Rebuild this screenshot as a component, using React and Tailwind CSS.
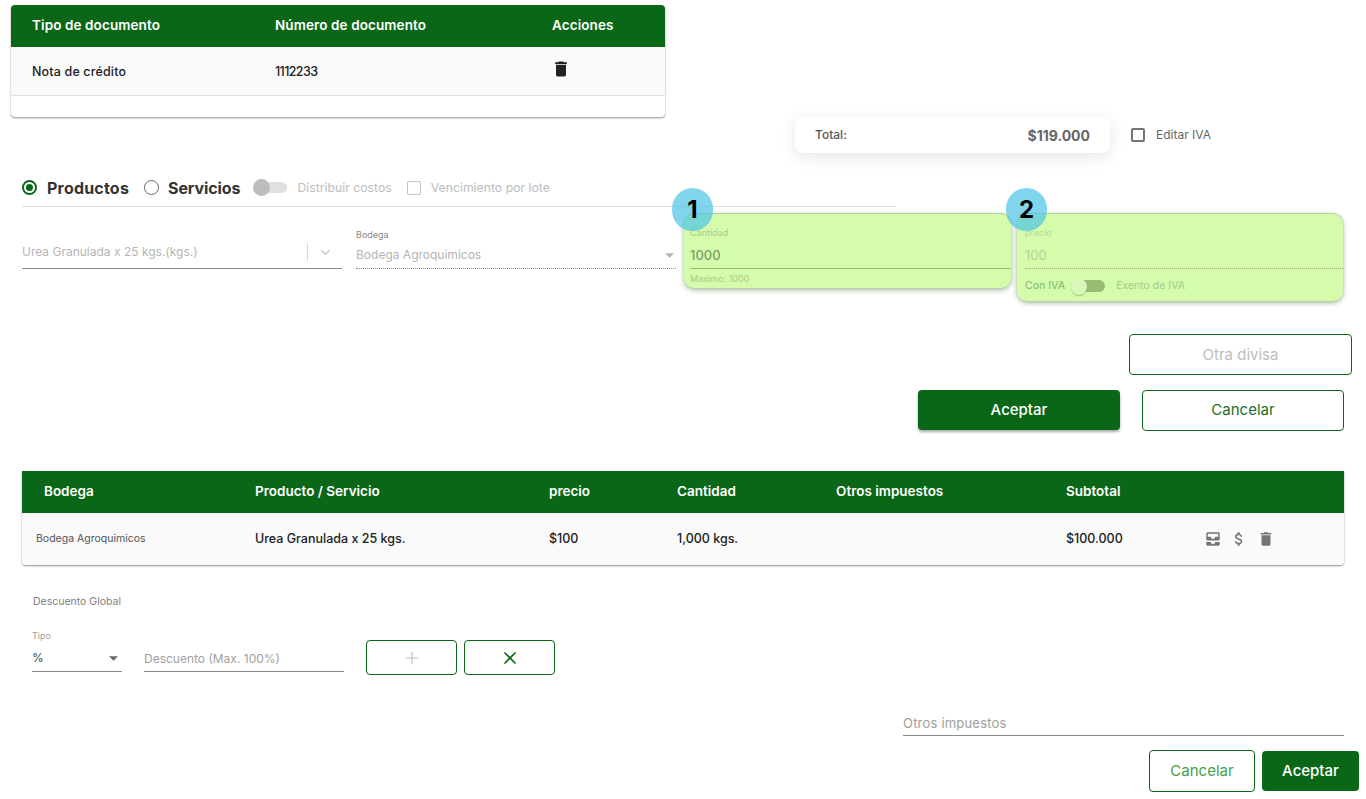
import { ChevronDown, Plus, X } from 'lucide-react'

function Trash({ className }) {
  return (
    <svg viewBox="0 0 24 24" className={className} fill="currentColor">
      <path d="M6 19c0 1.1.9 2 2 2h8c1.1 0 2-.9 2-2V7H6v12zM19 4h-3.5l-1-1h-5l-1 1H5v2h14V4z" />
    </svg>
  )
}

function AllInbox({ className }) {
  return (
    <svg viewBox="0 0 24 24" className={className} fill="currentColor">
      <path d="M19 3H5c-1.1 0-2 .9-2 2v7c0 1.1.9 2 2 2h14c1.1 0 2-.9 2-2V5c0-1.1-.9-2-2-2zm0 6h-4c0 1.62-1.38 3-3 3s-3-1.38-3-3H5V5h14v4zm-4 7h6v3c0 1.1-.9 2-2 2H5c-1.1 0-2-.9-2-2v-3h6c0 1.66 1.34 3 3 3s3-1.34 3-3z" />
    </svg>
  )
}

function Dollar({ className }) {
  return (
    <svg viewBox="0 0 24 24" className={className} fill="currentColor">
      <path d="M11.8 10.9c-2.27-.59-3-1.2-3-2.15 0-1.09 1.01-1.85 2.7-1.85 1.78 0 2.44.85 2.5 2.1h2.21c-.07-1.72-1.12-3.3-3.21-3.81V3h-3v2.16c-1.94.42-3.5 1.68-3.5 3.61 0 2.31 1.91 3.46 4.7 4.13 2.5.6 3 1.48 3 2.41 0 .69-.49 1.79-2.7 1.79-2.06 0-2.87-.92-2.98-2.1h-2.2c.12 2.19 1.76 3.42 3.68 3.83V21h3v-2.15c1.95-.37 3.5-1.5 3.5-3.55 0-2.84-2.43-3.81-4.7-4.4z" />
    </svg>
  )
}

function Caret({ className }) {
  return (
    <svg viewBox="0 0 10 5" className={className} fill="currentColor">
      <path d="M0 0h10L5 5z" />
    </svg>
  )
}

function Badge({ n, className }) {
  return (
    <div className={`absolute top-[188px] w-[41px] h-[43px] rounded-full bg-[#4cc4e6]/70 flex items-center justify-center text-[24px] font-bold text-black ${className}`}>
      {n}
    </div>
  )
}

export default function App() {
  return (
    <div className="relative w-[1366px] h-[799px] overflow-hidden bg-white font-['Inter',sans-serif] text-[#212121]">
      {/* tabla documentos */}
      <div className="ml-[11px] pt-[5px] w-[654px]">
        <div className="h-[112px] rounded-[4px] overflow-hidden bg-white shadow-[0_1px_2px_rgba(0,0,0,0.45)]">
          <div className="h-[42px] pb-[2px] bg-[#0b6718] flex items-center text-white text-[13.5px] font-semibold tracking-[0.1px]">
            <div className="w-[264px] pl-[21px]">Tipo de documento</div>
            <div className="w-[277px]">Número de documento</div>
            <div>Acciones</div>
          </div>
          <div className="h-[49px] pt-[2px] bg-[#fafafa] border-b border-[#e0e0e0] flex items-center text-[12.5px] font-medium">
            <div className="w-[264px] pl-[21px] tracking-[0.15px]">Nota de crédito</div>
            <div className="w-[277px] tracking-[-0.6px]">1112233</div>
            <Trash className="w-[20px] h-[20px] -ml-[1px] -mt-[7px] text-[#212121]" />
          </div>
        </div>
      </div>

      {/* total */}
      <div className="flex items-center pl-[795px] h-[36px]">
        <div className="w-[315px] h-[36px] rounded-[8px] bg-white shadow-[0_4px_16px_rgba(0,0,0,0.1)] flex items-center justify-between pl-[20px] pr-[20px]">
          <span className="text-[12px] font-medium text-[#555]">Total:</span>
          <span className="text-[14px] font-bold text-[#666]">$119.000</span>
        </div>
        <div className="ml-[21px] w-[14px] h-[14px] rounded-[2px] border-2 border-[#757575]" />
        <span className="ml-[11px] text-[12px] text-[#666]">Editar IVA</span>
      </div>

      {/* productos / servicios */}
      <div className="ml-[22px] mt-[23px] w-[874px] h-[31px] border-b border-[#e0e0e0] flex items-start">
        <div className="mt-[4px] w-[15px] h-[15px] rounded-full border-2 border-[#0b6718] flex items-center justify-center">
          <div className="w-[7px] h-[7px] rounded-full bg-[#0b6718]" />
        </div>
        <span className="ml-[10px] text-[16px] font-bold tracking-[0.2px] text-[#333]">Productos</span>
        <div className="ml-[15px] mt-[4px] w-[15px] h-[15px] rounded-full border-[1.5px] border-[#666]" />
        <span className="ml-[9px] text-[16px] font-bold tracking-[-0.1px] text-[#333]">Servicios</span>
        <div className="relative ml-[13px] mt-[4px] w-[34px] h-[14px]">
          <div className="absolute left-[2px] right-0 top-[2px] h-[11px] rounded-full bg-[#e0e0e0]" />
          <div className="absolute left-0 -top-[1px] w-[17px] h-[17px] rounded-full bg-[#bdbdbd]" />
        </div>
        <span className="ml-[10px] mt-[3px] text-[12.25px] text-[#bdbdbd]">Distribuir costos</span>
        <div className="ml-[15px] mt-[5px] w-[14px] h-[14px] border-[1.5px] border-[#c4c4c4] rounded-[2px]" />
        <span className="ml-[10px] mt-[3px] text-[12.25px] text-[#bdbdbd]">Vencimiento por lote</span>
      </div>

      {/* formulario */}
      <div className="flex items-start ml-[22px] mt-[7px]">
        <div className="w-[320px] h-[55px] border-b border-[#8a8a8a] flex items-end pb-[7px]">
          <span className="flex-1 text-[12px] text-[#b5b5b5]">Urea Granulada x 25 kgs.(kgs.)</span>
          <div className="w-px h-[18px] bg-[#d8d8d8] mr-[10px]" />
          <ChevronDown className="w-[15px] h-[15px] mr-[9px] mb-[1px] text-[#bdbdbd]" />
        </div>
        <div className="ml-[14px] w-[320px] h-[55px] border-b border-dotted border-[#8a8a8a] flex flex-col justify-end pb-[4px]">
          <span className="text-[9px] text-[#888] mb-[5px]">Bodega</span>
          <div className="flex items-center justify-between pr-[2px]">
            <span className="text-[12px] text-[#b5b5b5]">Bodega Agroquimicos</span>
            <Caret className="w-[9px] h-[5px] text-[#b5b5b5]" />
          </div>
        </div>

        <div className="ml-[8px] w-[327px] h-[74px] rounded-[10px] bg-[#d5fcab] shadow-[0_-1px_1px_rgba(100,170,60,0.5),0_2px_5px_rgba(70,120,50,0.5)] pl-[6px] pt-[12px] flex flex-col">
          <span className="text-[9px] text-[#a9c98f]">Cantidad</span>
          <span className="mt-[6px] text-[13px] font-medium text-[#7f9c6a]">1000</span>
          <div className="mt-[3px] h-px shrink-0 bg-[#97bc79]" />
          <span className="mt-[3px] text-[9px] text-[#a9c98f]">Maximo: 1000</span>
        </div>

        <div className="ml-[6px] w-[326px] h-[87px] rounded-[10px] bg-[#d5fcab] shadow-[0_-1px_1px_rgba(100,170,60,0.5),0_2px_5px_rgba(70,120,50,0.5)] pl-[8px] pt-[12px] flex flex-col">
          <span className="text-[9px] text-[#b9d99f]">precio</span>
          <span className="mt-[6px] text-[13px] text-[#b3d598]">100</span>
          <div className="mt-[3px] shrink-0 border-b border-dotted border-[#97bc79]" />
          <div className="mt-[9px] flex items-center">
            <span className="text-[10.5px] font-medium text-[#8fc078]">Con IVA</span>
            <div className="relative ml-[6px] w-[34px] h-[14px]">
              <div className="absolute left-[8px] right-0 top-[1px] h-[12px] rounded-full bg-[#97bd73]" />
              <div className="absolute left-0 top-0 w-[16px] h-[16px] rounded-full bg-[#d9f7ba] shadow-[0_1px_1px_rgba(70,120,50,0.4)]" />
            </div>
            <span className="ml-[11px] text-[10.5px] text-[#a3c98c]">Exento de IVA</span>
          </div>
        </div>
      </div>

      <Badge n="1" className="left-[672px]" />
      <Badge n="2" className="left-[1006px]" />

      {/* botones formulario */}
      <div className="mt-[33px] flex justify-end pr-[14px]">
        <div className="w-[223px] h-[41px] pt-[1px] rounded-[4px] border border-[#0b6718] flex items-center justify-center text-[15px] text-[#bdbdbd]">
          Otra divisa
        </div>
      </div>
      <div className="mt-[15px] ml-[918px] flex items-start">
        <div className="w-[202px] h-[40px] rounded-[4px] bg-[#0b6718] shadow-[0_2px_3px_rgba(0,0,0,0.35)] flex items-center justify-center text-[15px] font-medium text-white">
          Aceptar
        </div>
        <div className="ml-[22px] w-[202px] h-[41px] rounded-[4px] border border-[#0b6718] flex items-center justify-center text-[15px] text-[#1b6e2a]">
          Cancelar
        </div>
      </div>

      {/* tabla productos */}
      <div className="ml-[22px] mt-[40px] w-[1322px] h-[94px] rounded-b-[4px] overflow-hidden shadow-[0_1px_2px_rgba(0,0,0,0.45)]">
        <div className="h-[42px] pb-[2px] bg-[#0b6718] flex items-center text-white text-[13.5px] font-semibold">
          <div className="w-[233px] pl-[22px]">Bodega</div>
          <div className="w-[294px]">Producto / Servicio</div>
          <div className="w-[128px]">precio</div>
          <div className="w-[159px]">Cantidad</div>
          <div className="w-[230px]">Otros impuestos</div>
          <div>Subtotal</div>
        </div>
        <div className="h-[52px] bg-[#fafafa] flex items-center text-[12.5px] font-medium">
          <div className="w-[233px] pl-[14px] text-[10.5px] font-normal text-[#555]">Bodega Agroquimicos</div>
          <div className="w-[294px]">Urea Granulada x 25 kgs.</div>
          <div className="w-[128px]">$100</div>
          <div className="w-[159px]">1,000 kgs.</div>
          <div className="w-[230px]" />
          <div className="w-[138px]">$100.000</div>
          <div className="flex items-center text-[#757575]">
            <AllInbox className="w-[18px] h-[18px]" />
            <Dollar className="ml-[8px] w-[18px] h-[18px]" />
            <Trash className="ml-[9px] w-[18px] h-[18px]" />
          </div>
        </div>
      </div>

      {/* descuento global */}
      <div className="ml-[33px] mt-[30px] text-[10.5px] leading-[13px] text-[#808080]">Descuento Global</div>
      <div className="ml-[32px] mt-[22px] flex items-start">
        <div className="w-[90px] h-[42px] border-b border-[#8a8a8a] flex flex-col">
          <span className="text-[9px] leading-[12px] text-[#9e9e9e]">Tipo</span>
          <div className="mt-[7px] flex items-center justify-between pr-[4px]">
            <span className="text-[12px] text-[#444]">%</span>
            <Caret className="w-[9px] h-[5px] text-[#666]" />
          </div>
        </div>
        <div className="ml-[22px] w-[200px] h-[42px] border-b border-[#8a8a8a] flex items-end pb-[3px] text-[12px] text-[#a0a0a0]">
          Descuento (Max. 100%)
        </div>
        <div className="ml-[22px] mt-[10px] w-[91px] h-[35px] rounded-[4px] border border-[#0b6718] flex items-center justify-center text-[#bdbdbd]">
          <Plus className="w-[20px] h-[20px]" strokeWidth={1.3} />
        </div>
        <div className="ml-[7px] mt-[10px] w-[91px] h-[35px] rounded-[4px] border border-[#0b6718] flex items-center justify-center text-[#0b6718]">
          <X className="w-[20px] h-[20px]" strokeWidth={2} />
        </div>
      </div>

      {/* pie */}
      <div className="ml-[903px] mt-[37px] pt-[2px] w-[441px] h-[24px] border-b border-[#8a8a8a] text-[13px] leading-[19px] tracking-[0.2px] text-[#9e9e9e]">
        Otros impuestos
      </div>
      <div className="mt-[14px] ml-[1149px] flex items-start">
        <div className="w-[106px] h-[42px] rounded-[4px] border border-[#0b6718] flex items-center justify-center text-[15px] text-[#43a047]">
          Cancelar
        </div>
        <div className="ml-[7px] mt-[1px] w-[97px] h-[40px] rounded-[4px] bg-[#0b6718] flex items-center justify-center text-[15px] font-medium text-white">
          Aceptar
        </div>
      </div>
    </div>
  )
}
